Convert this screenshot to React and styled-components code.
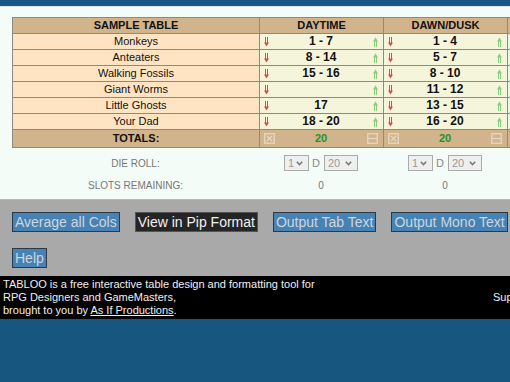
import React from 'react';
import styled, { createGlobalStyle } from 'styled-components';

const Global = createGlobalStyle`
  html, body { margin: 0; padding: 0; background: #17577f; overflow: hidden; }
  body { font-family: "Liberation Sans", Arial, sans-serif; }
`;

const COLS = [247, 124, 124, 124];

const Page = styled.div`
  width: 900px;
`;

const TopBar = styled.div`
  height: 6px;
  background: #1b5786;
  border-bottom: 1px solid #d9e6ec;
`;

const Workspace = styled.section`
  background: #f3fcf7;
  padding: 10px 0 3px 12px;
`;

const Table = styled.table`
  border-collapse: collapse;
  table-layout: fixed;
  width: ${COLS.reduce((a, b) => a + b, 0)}px;
  font-size: 11px;
  color: #111;
`;

const Cell = styled.td`
  border: 1px solid #8c8a84;
  padding: 0;
  height: 15px;
  line-height: 15px;
  text-align: center;
  white-space: nowrap;
  overflow: hidden;
  background: ${(p) =>
    p.$kind === 'head' || p.$kind === 'total'
      ? '#d2b48c'
      : p.$kind === 'label'
      ? '#ffe4c4'
      : '#f5f5dc'};
  font-weight: ${(p) => (p.$kind === 'head' || p.$kind === 'total' ? 700 : 400)};
  ${(p) => p.$kind === 'total' && 'height: 17px; line-height: 17px;'}
`;

const CellInner = styled.div`
  display: flex;
  align-items: center;
  padding: 0 5px 0 4px;
`;

const Value = styled.span`
  flex: 1;
  text-align: center;
  font-weight: 700;
  font-size: 12px;
  color: ${(p) => (p.$green ? '#1f931f' : '#111')};
  ${(p) => p.$green && 'font-size: 11px;'}
`;

const Arrow = ({ up }) => (
  <svg width="5" height="10" viewBox="0 0 5 10">
    {up ? (
      <g fill="none" stroke="#86cf7c" strokeWidth="1">
        <path d="M1.5 10V4M3.5 10V4" />
        <path d="M0 4.5L2.5 0.5L5 4.5Z" fill="#86cf7c" stroke="none" />
      </g>
    ) : (
      <g fill="none" stroke="#e04a4a" strokeWidth="1">
        <path d="M1.5 0V6M3.5 0V6" />
        <path d="M0 5.5L2.5 9.5L5 5.5Z" fill="#e04a4a" stroke="none" />
      </g>
    )}
  </svg>
);

const IconBox = ({ kind }) => (
  <svg width="11" height="11" viewBox="0 0 11 11">
    <rect x="0.75" y="0.75" width="9.5" height="9.5" fill="none" stroke="#e6d8c2" strokeWidth="1.3" />
    {kind === 'x' ? (
      <path d="M3 3L8 8M8 3L3 8" stroke="#e6d8c2" strokeWidth="1.2" />
    ) : (
      <path d="M1 5.5H10" stroke="#e6d8c2" strokeWidth="1.2" />
    )}
  </svg>
);

const Controls = styled.div`
  display: grid;
  grid-template-columns: ${COLS.map((c) => c + 'px').join(' ')};
  grid-auto-rows: 22px;
  margin-top: 4px;
  font-size: 10px;
  color: #777;
`;

const ControlCell = styled.div`
  display: flex;
  align-items: center;
  justify-content: center;
  gap: 3px;
`;

const FakeSelect = styled.div`
  box-sizing: border-box;
  width: ${(p) => p.$w}px;
  height: 16px;
  border: 1px solid #aaa;
  background: #efefef;
  color: #9a9a9a;
  font-size: 11px;
  display: flex;
  align-items: center;
  justify-content: space-between;
  padding: 0 5px 0 3px;
`;

const DLabel = styled.span`
  color: #888;
  font-size: 11px;
  margin-right: 1px;
`;

const Chevron = () => (
  <svg width="7" height="5" viewBox="0 0 7 5">
    <path d="M0.8 0.8L3.5 3.6L6.2 0.8" fill="none" stroke="#777" strokeWidth="1.5" />
  </svg>
);

const Buttons = styled.section`
  background: #a9a9a9;
  border-top: 1px solid #b8b8b8;
  padding: 12px 0 8px 12px;
  display: flex;
  flex-wrap: wrap;
  gap: 16px 15px;
  width: 530px;
  box-sizing: border-box;
`;

const Button = styled.button`
  font-family: "Liberation Sans", Arial, sans-serif;
  font-size: 14px;
  height: 20px;
  line-height: 18px;
  padding: 0 2px;
  border: 1px solid ${(p) => (p.$dark ? '#555' : '#2b3a47')};
  background: ${(p) => (p.$dark ? '#252525' : '#4682b4')};
  color: ${(p) => (p.$dark ? '#f2f2f2' : '#cfd6dc')};
  border-radius: 0;
  white-space: nowrap;
`;

const Footer = styled.footer`
  background: #000;
  color: #f0f0f0;
  font-size: 11px;
  line-height: 13px;
  padding: 2px 3px 2px;
  display: flex;
  align-items: center;
`;

const FooterText = styled.div`
  width: 490px;
  flex-shrink: 0;
`;

const FooterSide = styled.div`
  white-space: nowrap;
`;

const Link = styled.a`
  color: #f0f0f0;
  text-decoration: underline;
`;

const rows = [
  ['Monkeys', '1 - 7', '1 - 4'],
  ['Anteaters', '8 - 14', '5 - 7'],
  ['Walking Fossils', '15 - 16', '8 - 10'],
  ['Giant Worms', '', '11 - 12'],
  ['Little Ghosts', '17', '13 - 15'],
  ['Your Dad', '18 - 20', '16 - 20'],
];

const heads = ['DAYTIME', 'DAWN/DUSK'];

export default function App() {
  return (
    <Page>
      <Global />
      <TopBar />
      <Workspace>
        <Table>
          <colgroup>
            {COLS.map((w, i) => (
              <col key={i} style={{ width: w }} />
            ))}
          </colgroup>
          <tbody>
            <tr>
              <Cell $kind="head">SAMPLE TABLE</Cell>
              {heads.map((h) => (
                <Cell $kind="head" key={h}>{h}</Cell>
              ))}
              <Cell $kind="head" />
            </tr>
            {rows.map((r) => (
              <tr key={r[0]}>
                <Cell $kind="label">{r[0]}</Cell>
                {r.slice(1).map((v, i) => (
                  <Cell key={i}>
                    <CellInner>
                      <Arrow />
                      <Value>{v}</Value>
                      <Arrow up />
                    </CellInner>
                  </Cell>
                ))}
                <Cell />
              </tr>
            ))}
            <tr>
              <Cell $kind="total">TOTALS:</Cell>
              {heads.map((h) => (
                <Cell $kind="total" key={h}>
                  <CellInner>
                    <IconBox kind="x" />
                    <Value $green>20</Value>
                    <IconBox kind="minus" />
                  </CellInner>
                </Cell>
              ))}
              <Cell $kind="total" />
            </tr>
          </tbody>
        </Table>
        <Controls>
          <ControlCell>DIE ROLL:</ControlCell>
          {heads.map((h) => (
            <ControlCell key={h}>
              <FakeSelect $w={25}>1<Chevron /></FakeSelect>
              <DLabel>D</DLabel>
              <FakeSelect $w={34}>20<Chevron /></FakeSelect>
            </ControlCell>
          ))}
          <ControlCell />
          <ControlCell>SLOTS REMAINING:</ControlCell>
          {heads.map((h) => (
            <ControlCell key={h}>0</ControlCell>
          ))}
          <ControlCell />
        </Controls>
      </Workspace>
      <Buttons>
        <Button>Average all Cols</Button>
        <Button $dark>View in Pip Format</Button>
        <Button>Output Tab Text</Button>
        <Button>Output Mono Text</Button>
        <Button>Help</Button>
      </Buttons>
      <Footer>
        <FooterText>
          TABLOO is a free interactive table design and formatting tool for
          <br />
          RPG Designers and GameMasters,
          <br />
          brought to you by <Link href="#">As If Productions</Link>.
        </FooterText>
        <FooterSide>Support TABLOO on Patreon</FooterSide>
      </Footer>
    </Page>
  );
}
